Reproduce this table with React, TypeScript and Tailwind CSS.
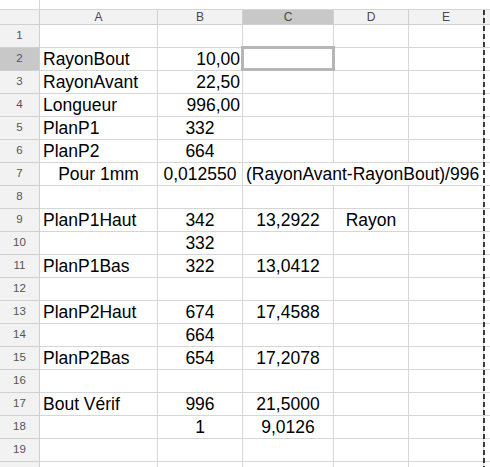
type Align = 'left' | 'center' | 'right';
type CellData = { text?: string; align?: Align };

const rows: CellData[][] = [
  [],
  [{ text: 'RayonBout' }, { text: '10,00', align: 'right' }],
  [{ text: 'RayonAvant' }, { text: '22,50', align: 'right' }],
  [{ text: 'Longueur' }, { text: '996,00', align: 'right' }],
  [{ text: 'PlanP1' }, { text: '332', align: 'center' }],
  [{ text: 'PlanP2' }, { text: '664', align: 'center' }],
  [{ text: 'Pour 1mm', align: 'center' }, { text: '0,012550', align: 'center' }],
  [],
  [{ text: 'PlanP1Haut' }, { text: '342', align: 'center' }, { text: '13,2922', align: 'center' }, { text: 'Rayon', align: 'center' }],
  [{}, { text: '332', align: 'center' }],
  [{ text: 'PlanP1Bas' }, { text: '322', align: 'center' }, { text: '13,0412', align: 'center' }],
  [],
  [{ text: 'PlanP2Haut' }, { text: '674', align: 'center' }, { text: '17,4588', align: 'center' }],
  [{}, { text: '664', align: 'center' }],
  [{ text: 'PlanP2Bas' }, { text: '654', align: 'center' }, { text: '17,2078', align: 'center' }],
  [],
  [{ text: 'Bout Vérif' }, { text: '996', align: 'center' }, { text: '21,5000', align: 'center' }],
  [{}, { text: '1', align: 'center' }, { text: '9,0126', align: 'center' }],
  [],
  [],
];

const alignClass: Record<Align, string> = {
  left: 'justify-start pl-[3px]',
  center: 'justify-center',
  right: 'justify-end pr-[2px]',
};

function Cell({ data }: { data?: CellData }) {
  const align = data?.align ?? 'left';
  return (
    <div className={`flex items-center border-r border-b border-[#d6d6d6] whitespace-nowrap overflow-visible ${alignClass[align]}`}>
      {data?.text}
    </div>
  );
}

const letters = ['A', 'B', 'C', 'D', 'E', ''];

export default function App() {
  return (
    <div className="relative w-[490px] h-[467px] overflow-hidden bg-white font-['Liberation_Sans',Arial,sans-serif] text-[17.5px] text-black">
      <div className="grid grid-cols-[40px_118px_85px_91px_75px_75px_60px] grid-rows-[10px_15px_repeat(20,23px)]">
        {/* top strip */}
        <div className="border-r border-b border-[#d6d6d6]" />
        <div className="col-span-6 border-b border-[#d6d6d6]" />

        {/* column headers */}
        <div className="bg-[#f2f2f2] border-r border-b border-[#d0d0d0]" />
        {letters.map((l, i) => (
          <div
            key={i}
            className={`flex items-center justify-center border-r border-b border-[#d0d0d0] text-[12px] leading-none text-[#4a4a4a] ${l === 'C' ? 'bg-[#c8c8c8]' : 'bg-[#f2f2f2]'}`}
          >
            {l}
          </div>
        ))}

        {rows.map((r, ri) => {
          const n = ri + 1;
          return [
            <div
              key={`h${n}`}
              className={`flex items-center justify-center border-r border-b border-[#d0d0d0] text-[11.5px] text-[#555] ${n === 2 ? 'bg-[#c8c8c8]' : 'bg-[#f2f2f2]'}`}
            >
              {n < 20 ? n : ''}
            </div>,
            <Cell key={`a${n}`} data={r[0]} />,
            <Cell key={`b${n}`} data={r[1]} />,
            n === 7 ? (
              <div key={`c${n}`} className="col-span-3 flex items-center pl-[3px] border-b border-[#d6d6d6] whitespace-nowrap">
                (RayonAvant-RayonBout)/996
              </div>
            ) : n === 2 ? (
              <div key={`c${n}`} className="relative border-r border-b border-[#d6d6d6]">
                <div className="absolute -top-[2px] -left-[2px] -right-[2px] -bottom-[1px] border-[3px] border-[#b6b6b6]" />
              </div>
            ) : (
              <Cell key={`c${n}`} data={r[2]} />
            ),
            ...(n === 7 ? [] : [<Cell key={`d${n}`} data={r[3]} />, <Cell key={`e${n}`} />]),
            <Cell key={`f${n}`} />,
          ];
        })}
      </div>

      {/* page break */}
      <svg className="absolute left-[483px] top-[10px]" width="2" height="457">
        <line x1="1" y1="0" x2="1" y2="457" stroke="#000" strokeWidth="1.5" strokeDasharray="5 3" />
      </svg>
    </div>
  );
}
